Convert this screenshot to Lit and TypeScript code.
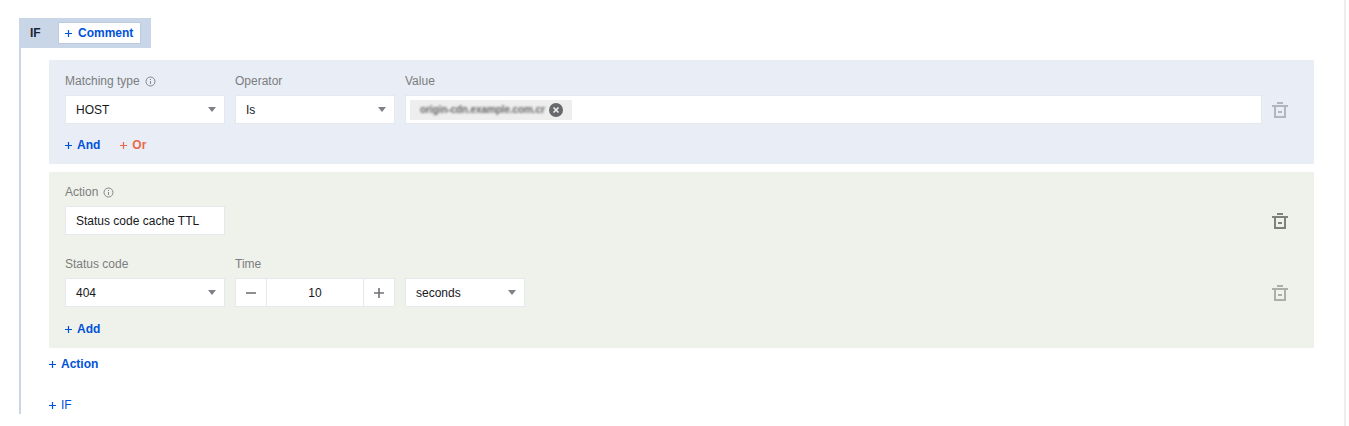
import { LitElement, html, css, svg } from "lit";
import { customElement } from "lit/decorators.js";

const trash = svg`<path d="M5 1h6v2H5zM0 4h16v2H0zM2 6h2v9h8V6h2v11H2zM6 10h4v2H6z" fill="currentColor" />`;

@customElement("app-root")
export class AppRoot extends LitElement {
  static styles = css`
    :host {
      display: block;
      font-family: "Liberation Sans", Arial, sans-serif;
      font-size: 12px;
      line-height: 16px;
      color: #111;
      background: #fff;
    }
    .page {
      box-sizing: border-box;
      width: 1346px;
      height: 426px;
      padding: 18px 0 0 19px;
      border-right: 2px solid #eeeeee;
    }
    .if-head {
      display: flex;
      align-items: center;
      width: 132px;
      height: 30px;
      box-sizing: border-box;
      padding-left: 11px;
      background: #c9d6e8;
    }
    .if-head__title {
      width: 28px;
      font-weight: 700;
      color: #1c2333;
    }
    .comment {
      box-sizing: border-box;
      width: 83px;
      height: 22px;
      padding: 2px 6px;
      background: #fff;
      border: 1px solid #bccbe0;
      font-weight: 700;
      white-space: nowrap;
      color: #0052d9;
    }
    .comment .plus {
      margin-right: 6px;
    }
    .plus {
      display: inline-block;
      width: 7px;
      height: 7px;
      margin-right: 5px;
    }
    .if-body {
      box-sizing: border-box;
      width: 1295px;
      height: 366px;
      padding: 12px 0 0 28px;
      border-left: 2px solid #c9d6e8;
    }
    .panel {
      padding: 13px 26px 0 16px;
      box-sizing: border-box;
    }
    .panel--match {
      height: 104px;
      background: #e9edf5;
      margin-bottom: 8px;
    }
    .panel--action {
      height: 176px;
      padding-top: 12px;
      background: #eff2ea;
    }
    .row {
      display: flex;
      align-items: flex-end;
      gap: 10px;
    }
    .field {
      display: flex;
      flex-direction: column;
      gap: 6px;
    }
    .field--grow {
      flex: 1;
    }
    .label {
      display: flex;
      align-items: center;
      gap: 5px;
      color: #7b7d80;
    }
    .label svg {
      display: block;
    }
    .box {
      box-sizing: border-box;
      display: flex;
      align-items: center;
      justify-content: space-between;
      height: 29px;
      padding: 0 9px 0 10px;
      background: #fff;
      border: 1px solid #e5e8ec;
      color: #16181c;
    }
    .box--select {
      width: 160px;
    }
    .box--short {
      width: 120px;
    }
    .box--value {
      justify-content: flex-start;
      padding: 0 4px;
    }
    .arrow {
      width: 0;
      height: 0;
      margin-right: -1px;
      border-left: 4px solid transparent;
      border-right: 4px solid transparent;
      border-top: 5px solid #7f8186;
    }
    .tag {
      display: flex;
      align-items: center;
      gap: 4px;
      height: 20px;
      padding: 0 9px 0 10px;
      background: #eeeeee;
    }
    .tag__text {
      width: 125px;
      overflow: hidden;
      white-space: nowrap;
      font-size: 10px;
      font-weight: 700;
      letter-spacing: -0.1px;
      color: #666;
      filter: blur(1.1px);
    }
    .tag__clear {
      display: block;
    }
    .stepper {
      box-sizing: border-box;
      display: flex;
      width: 160px;
      height: 29px;
      background: #fff;
      border: 1px solid #e5e8ec;
      color: #16181c;
    }
    .stepper__btn {
      display: flex;
      align-items: center;
      justify-content: center;
      width: 30px;
      color: #6f7175;
    }
    .stepper__btn:first-child {
      border-right: 1px solid #e5e8ec;
    }
    .stepper__btn:last-child {
      border-left: 1px solid #e5e8ec;
    }
    .stepper__value {
      flex: 1;
      text-align: center;
      line-height: 28px;
    }
    .trash {
      display: block;
      flex: none;
    }
    .trash--muted {
      color: #b2b6bf;
    }
    .trash--green-muted {
      color: #abafa9;
    }
    .trash--dark {
      color: #7e817c;
    }
    .row__end {
      margin-left: auto;
      height: 29px;
      display: flex;
      align-items: center;
    }
    .links {
      display: flex;
      gap: 20px;
      margin-top: 13px;
      font-weight: 700;
      color: #0052d9;
    }
    .links--add {
      margin-top: 14px;
    }
    .link--or {
      color: #e8694a;
    }
    .row--second {
      margin-top: 21px;
    }
    .plain-link {
      margin-top: 8px;
      font-weight: 700;
      color: #0052d9;
    }
    .plain-link--if {
      margin-top: 25px;
      font-weight: 400;
    }
  `;

  private info() {
    return html`<svg width="11" height="11" viewBox="0 0 11 11" fill="none" stroke="#85878a">
      <circle cx="5.5" cy="5.5" r="4.5" />
      <path d="M5.5 5v3M5.5 3v1" />
    </svg>`;
  }

  private trashIcon(cls: string) {
    return html`<svg class="trash ${cls}" width="16" height="18" viewBox="0 0 16 18">${trash}</svg>`;
  }

  private select(text: string, cls = "box--select") {
    return html`<div class="box ${cls}"><span>${text}</span><span class="arrow"></span></div>`;
  }

  private add(text: string) {
    return html`<svg class="plus" viewBox="0 0 7 7">
        <path d="M0 2.9h7v1.2H0zM2.9 0h1.2v7H2.9z" fill="currentColor" /></svg
      >${text}`;
  }

  render() {
    return html`<div class="page">
      <div class="if-head">
        <span class="if-head__title">IF</span>
        <span class="comment">${this.add("Comment")}</span>
      </div>
      <div class="if-body">
        <section class="panel panel--match">
          <div class="row">
            <div class="field">
              <span class="label">Matching type ${this.info()}</span>
              ${this.select("HOST")}
            </div>
            <div class="field">
              <span class="label">Operator</span>
              ${this.select("Is")}
            </div>
            <div class="field field--grow">
              <span class="label">Value</span>
              <div class="box box--value">
                <span class="tag">
                  <span class="tag__text">origin-cdn.example.com.cn</span>
                  <svg class="tag__clear" width="14" height="14" viewBox="0 0 14 14">
                    <circle cx="7" cy="7" r="7" fill="#66686c" />
                    <path d="M4.5 4.5l5 5M9.5 4.5l-5 5" stroke="#eee" stroke-width="1.6" />
                  </svg>
                </span>
              </div>
            </div>
            <div class="row__end">${this.trashIcon("trash--muted")}</div>
          </div>
          <div class="links">
            <span>${this.add("And")}</span>
            <span class="link--or">${this.add("Or")}</span>
          </div>
        </section>
        <section class="panel panel--action">
          <div class="row">
            <div class="field">
              <span class="label">Action ${this.info()}</span>
              <div class="box box--select">Status code cache TTL</div>
            </div>
            <div class="row__end">${this.trashIcon("trash--dark")}</div>
          </div>
          <div class="row row--second">
            <div class="field">
              <span class="label">Status code</span>
              ${this.select("404")}
            </div>
            <div class="field">
              <span class="label">Time</span>
              <div class="stepper">
                <span class="stepper__btn">
                  <svg width="12" height="12" viewBox="0 0 12 12"><path d="M1 5.2h10v1.6H1z" fill="currentColor" /></svg>
                </span>
                <span class="stepper__value">10</span>
                <span class="stepper__btn">
                  <svg width="12" height="12" viewBox="0 0 12 12"><path d="M1 5.2h10v1.6H1zM5.2 1h1.6v10H5.2z" fill="currentColor" /></svg>
                </span>
              </div>
            </div>
            ${this.select("seconds", "box--short")}
            <div class="row__end">${this.trashIcon("trash--green-muted")}</div>
          </div>
          <div class="links links--add"><span>${this.add("Add")}</span></div>
        </section>
        <div class="plain-link">${this.add("Action")}</div>
        <div class="plain-link plain-link--if">${this.add("IF")}</div>
      </div>
    </div>`;
  }
}
